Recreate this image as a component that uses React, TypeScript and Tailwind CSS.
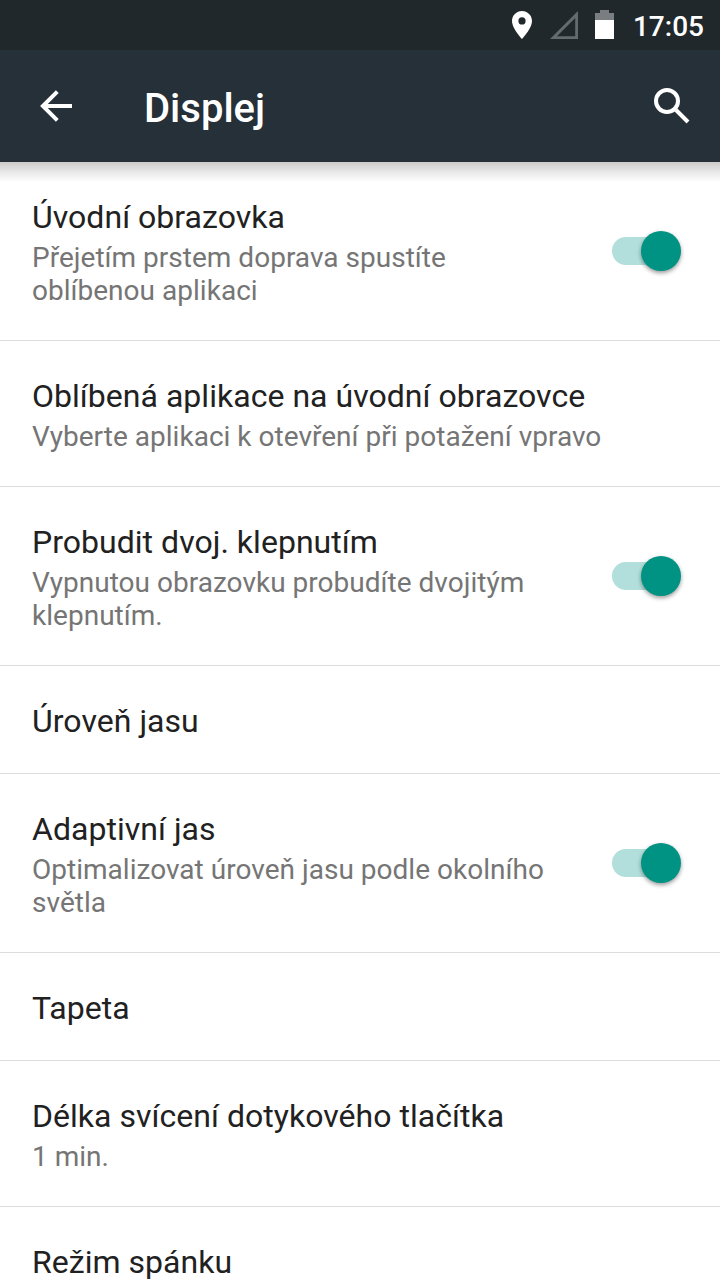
type Preference = {
    title: string;
    summary?: string;
    checked?: boolean;
};

const preferences: Preference[] = [
    { title: "Úvodní obrazovka", summary: "Přejetím prstem doprava spustíte oblíbenou aplikaci", checked: true },
    { title: "Oblíbená aplikace na úvodní obrazovce", summary: "Vyberte aplikaci k otevření při potažení vpravo" },
    { title: "Probudit dvoj. klepnutím", summary: "Vypnutou obrazovku probudíte dvojitým klepnutím.", checked: true },
    { title: "Úroveň jasu" },
    { title: "Adaptivní jas", summary: "Optimalizovat úroveň jasu podle okolního světla", checked: true },
    { title: "Tapeta" },
    { title: "Délka svícení dotykového tlačítka", summary: "1 min." },
    { title: "Režim spánku" },
];

function StatusBar() {
    return (
        <div className="flex h-[50px] items-center justify-end bg-[#21282b] pr-4 text-white">
            <svg className="mr-[18px] h-7 w-5" viewBox="0 0 20 28" fill="currentColor">
                <path fillRule="evenodd" d="M10 0C4.5 0 0 4.4 0 9.9C0 17.2 10 28 10 28S20 17.2 20 9.9C20 4.4 15.5 0 10 0ZM10 6.3A3.6 3.6 0 1 1 10 13.5A3.6 3.6 0 0 1 10 6.3Z" />
            </svg>
            <svg className="mr-[17px] h-7 w-7" viewBox="0 0 28 28" fill="#646a6d">
                <path fillRule="evenodd" d="M28 0V28H0ZM25.2 7L7 25.2H25.2Z" />
            </svg>
            <svg className="mr-[19px] mb-0.5 h-[29px] w-[19px]" viewBox="0 0 19 29">
                <path d="M5 0H14V3H19V10H0V3H5Z" fill="#7b7e80" />
                <path d="M0 10H19V29H0Z" fill="#fff" />
            </svg>
            <span className="pt-1 text-[28px] leading-8 font-medium">17:05</span>
        </div>
    );
}

function ActionBar() {
    return (
        <header className="relative z-10 flex h-28 items-center bg-[#263039] px-10 text-white">
            <button aria-label="Zpět" className="mr-[72px]">
                <svg className="block h-8 w-8" viewBox="0 0 32 32" fill="none" stroke="currentColor" strokeWidth="4">
                    <path d="M32 16H4M17.3 1.6L2.9 16L17.3 30.4" />
                </svg>
            </button>
            <h1 className="flex-1 pt-1.5 text-[40px] leading-12 font-medium">Displej</h1>
            <button aria-label="Hledat" className="-mr-2.5">
                <svg className="block h-9 w-9" viewBox="0 0 36 36" fill="none" stroke="currentColor" strokeWidth="4">
                    <circle cx="13" cy="13" r="11" />
                    <path d="M22 22L34 34" />
                </svg>
            </button>
            {/* Elevation shadow cast on the list */}
            <div className="absolute inset-x-0 top-full h-5 bg-gradient-to-b from-black/20 via-black/9 to-transparent" />
        </header>
    );
}

function Switch({ checked, label }: { checked: boolean; label: string }) {
    return (
        <button role="switch" aria-checked={checked} aria-label={label} className="flex h-10 w-[69px] items-center">
            <span className="h-7 w-12 rounded-l-full bg-[#b2dfdb]" />
            <span className="-ml-[19px] size-10 shrink-0 rounded-full bg-[#009383] shadow-[0_2px_4px_rgba(0,0,0,0.4)]" />
        </button>
    );
}

function PreferenceRow({ title, summary, checked }: Preference) {
    return (
        <li className="flex items-center border-b border-[#dcdcdc] px-8">
            <div className="flex-1 pt-9 pb-[33px]">
                <div className="text-[32px] leading-[38px] tracking-[0.03px] text-[#212121]">{title}</div>
                {summary && (
                    <div className="mt-[5px] text-[28px] leading-[33px] tracking-[0.02px] text-[#757575]">{summary}</div>
                )}
            </div>
            {checked !== undefined && (
                <div className="mr-[7px] ml-12">
                    <Switch checked={checked} label={title} />
                </div>
            )}
        </li>
    );
}

export default function App() {
    return (
        <div className="h-[1280px] w-[720px] overflow-hidden bg-white font-['Roboto',sans-serif]">
            <StatusBar />
            <ActionBar />
            <ul>
                {preferences.map((p) => (
                    <PreferenceRow key={p.title} {...p} />
                ))}
            </ul>
        </div>
    );
}
